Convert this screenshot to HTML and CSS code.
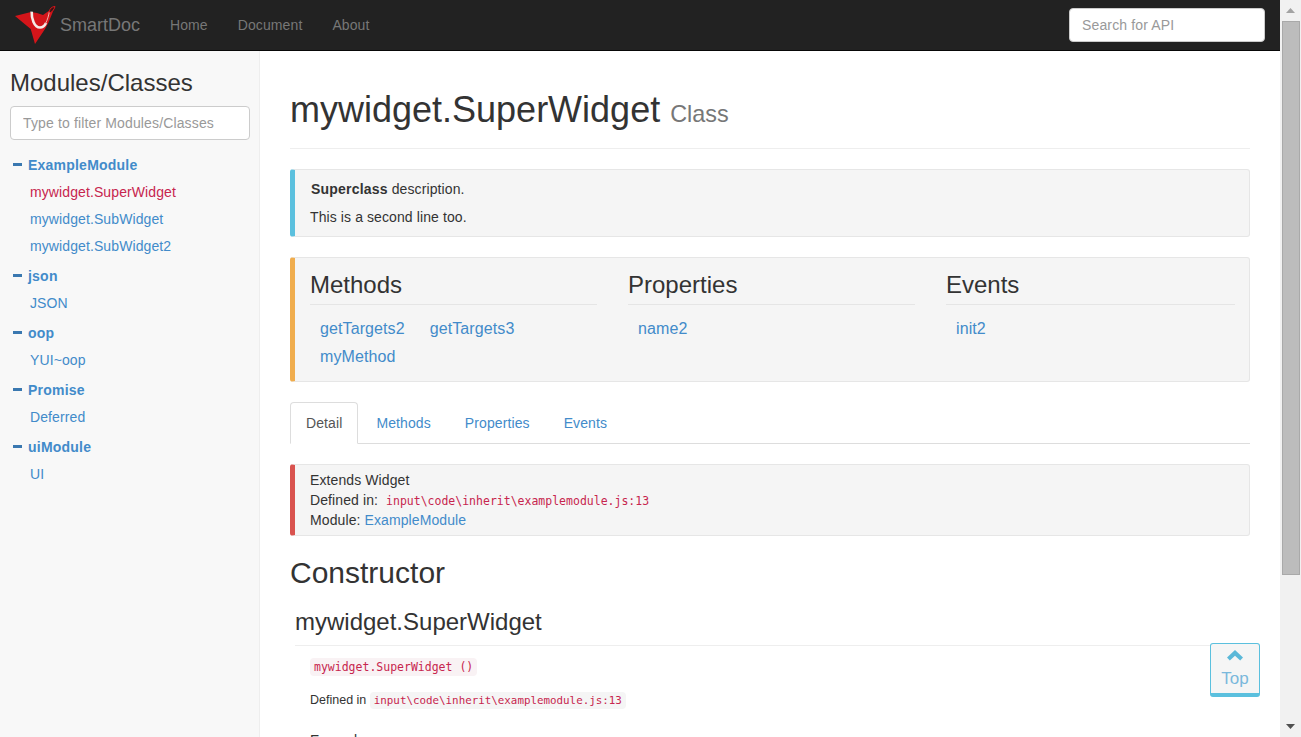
FILE: index.html
```html
<!DOCTYPE html>
<html lang="en">
<head>
<meta charset="utf-8">
<title>SmartDoc</title>
<link rel="stylesheet" href="styles.css">
</head>
<body>
<div class="window">
  <div class="page">
    <nav class="navbar">
      <a class="brand">
        <svg class="logo" width="42" height="41" viewBox="0 0 42 41">
          <path d="M1 12 L17 8 L23 9 L29 11 L41 2.5 L34.5 18.5 L31 25 L21 40 L16.7 25 Z" fill="#d4151a"/>
          <path d="M17.7 7.6 C17.4 14 20 23.5 26 23.5 C29 23.5 31 21 32 19" fill="none" stroke="#f6ece8" stroke-width="2.6"/>
          <path d="M31.5 19.5 C33.5 16 34.5 12 35.3 8" fill="none" stroke="#eeb4ac" stroke-width="1"/>
          <path d="M35.3 8 C35.5 4.5 38 2.5 41 2.5 C40.5 5 38.5 7.5 36 9" fill="#3a1414" stroke="#d4151a" stroke-width="1"/>
        </svg>
        <span class="brand-name">SmartDoc</span>
      </a>
      <ul class="nav-links">
        <li><a>Home</a></li>
        <li><a>Document</a></li>
        <li><a>About</a></li>
      </ul>
      <input class="search" type="text" placeholder="Search for API">
    </nav>
    <div class="columns">
      <aside class="sidebar">
        <h3 class="side-title">Modules/Classes</h3>
        <input class="filter" type="text" placeholder="Type to filter Modules/Classes">
        <div class="group">
          <div class="group-head"><i class="minus"></i>ExampleModule</div>
          <a class="item active">mywidget.SuperWidget</a>
          <a class="item">mywidget.SubWidget</a>
          <a class="item">mywidget.SubWidget2</a>
        </div>
        <div class="group">
          <div class="group-head"><i class="minus"></i>json</div>
          <a class="item">JSON</a>
        </div>
        <div class="group">
          <div class="group-head"><i class="minus"></i>oop</div>
          <a class="item">YUI~oop</a>
        </div>
        <div class="group">
          <div class="group-head"><i class="minus"></i>Promise</div>
          <a class="item">Deferred</a>
        </div>
        <div class="group">
          <div class="group-head"><i class="minus"></i>uiModule</div>
          <a class="item">UI</a>
        </div>
      </aside>
      <main class="content">
        <div class="page-header">
          <h1>mywidget.SuperWidget <small>Class</small></h1>
        </div>
        <div class="callout callout-info">
          <p class="desc-first"><strong>Superclass</strong> description.</p>
          <p class="desc-second">This is a second line too.</p>
        </div>
        <div class="callout callout-warning summary">
          <section class="sum-col">
            <h3>Methods</h3>
            <div class="sum-links"><a>getTargets2</a><a>getTargets3</a><a>myMethod</a></div>
          </section>
          <section class="sum-col">
            <h3>Properties</h3>
            <div class="sum-links"><a>name2</a></div>
          </section>
          <section class="sum-col">
            <h3>Events</h3>
            <div class="sum-links"><a>init2</a></div>
          </section>
        </div>
        <ul class="tabs">
          <li class="tab active">Detail</li>
          <li class="tab">Methods</li>
          <li class="tab">Properties</li>
          <li class="tab">Events</li>
        </ul>
        <div class="callout callout-danger detail">
          <div>Extends Widget</div>
          <div>Defined in: <code class="plain">input\code\inherit\examplemodule.js:13</code></div>
          <div>Module: <a>ExampleModule</a></div>
        </div>
        <h2 class="section-title">Constructor</h2>
        <div class="member">
          <h3 class="member-title">mywidget.SuperWidget</h3>
          <div class="member-body">
            <p class="signature"><code>mywidget.SuperWidget ()</code></p>
            <p class="defined">Defined in <code class="grey">input\code\inherit\examplemodule.js:13</code></p>
            <h4 class="example">Example</h4>
          </div>
        </div>
      </main>
    </div>
    <a class="to-top">
      <svg class="chev" width="16" height="11" viewBox="0 0 16 11"><path d="M8 0 L16 7.5 L13.2 10.5 L8 5.8 L2.8 10.5 L0 7.5 Z" fill="#5bb8d8"/></svg>
      <span>Top</span>
    </a>
  </div>
  <div class="scrollbar">
    <div class="sb-btn"><svg width="9" height="5" viewBox="0 0 9 5"><path d="M4.5 0 L9 5 H0 Z" fill="#a3a3a3"/></svg></div>
    <div class="sb-track"><div class="sb-thumb"></div></div>
    <div class="sb-btn"><svg width="9" height="5" viewBox="0 0 9 5"><path d="M0 0 H9 L4.5 5 Z" fill="#505050"/></svg></div>
  </div>
</div>
</body>
</html>
```
FILE: styles.css
```css
* { box-sizing: border-box; }
html, body { margin: 0; height: 100%; overflow: hidden; }
body { font-family: "Liberation Sans", Arial, sans-serif; font-size: 14px; line-height: 20px; letter-spacing: 0.1px; color: #333; background: #fff; }
a { color: #428bca; text-decoration: none; }
h1, h2, h3, h4, p, ul { margin: 0; padding: 0; }
h1, h2, h3 { font-weight: 500; color: #333; line-height: 1.1; letter-spacing: 0; }
ul { list-style: none; }
strong { letter-spacing: 0.2px; }

.window { display: flex; width: 1301px; height: 737px; }
.page { position: relative; flex: 1; min-width: 0; display: flex; flex-direction: column; height: 737px; overflow: hidden; }

.navbar { flex: none; height: 51px; background: #222; border-bottom: 1px solid #080808; display: flex; align-items: center; padding: 0 15px 1px 14px; }
.brand { display: flex; align-items: center; }
.logo { display: block; }
.brand-name { margin-left: 4px; font-size: 18px; letter-spacing: 0; color: #777; }
.nav-links { display: flex; margin-left: 15px; }
.nav-links a { display: block; padding: 0 15px; color: #777; }
.search { margin-left: auto; width: 196px; height: 34px; border: 1px solid #ccc; border-radius: 4px; padding: 6px 12px; font: 14px "Liberation Sans", Arial, sans-serif; letter-spacing: 0.14px; background: #fff; color: #555; }
.search::placeholder, .filter::placeholder { color: #999; opacity: 1; }

.columns { flex: 1; min-height: 0; display: flex; }
.sidebar { flex: none; width: 260px; background: #f8f8f8; border-right: 1px solid #eee; padding: 19px 9px 0 10px; }
.side-title { font-size: 24px; line-height: 26px; margin-bottom: 10px; font-weight: 500; }
.filter { display: block; width: 240px; height: 34px; border: 1px solid #ccc; border-radius: 4px; padding: 6px 12px; font: 14px "Liberation Sans", Arial, sans-serif; letter-spacing: 0.14px; background: #fff; margin-bottom: 12px; }
.group { margin-bottom: 3px; }
.group-head { display: flex; align-items: center; height: 27px; padding: 0 0 2px 3px; font-weight: 700; letter-spacing: 0.22px; color: #428bca; }
.minus { width: 9px; height: 3px; background: #3a78b0; margin-right: 6px; }
.item { display: block; height: 27px; line-height: 27px; padding-left: 20px; }
.item.active { color: #c7254e; }

.content { flex: 1; min-width: 0; padding: 0 30px; overflow: hidden; }
.page-header { padding: 39px 0 14px; border-bottom: 1px solid #eee; margin-bottom: 20px; }
h1 { font-size: 36px; line-height: 40px; }
h1 small { font-size: 23.4px; font-weight: 400; color: #777; }

.callout { background: #f5f5f5; border: 1px solid #e6e6e6; border-left: 5px solid #5bc0de; border-radius: 3px; margin-bottom: 20px; padding: 0 15px; }
.callout-info { height: 68px; padding-top: 9px; }
.callout-warning { border-left-color: #f0ad4e; }
.callout-danger { border-left-color: #d9534f; }
.desc-first { padding-left: 1px; margin-bottom: 8px; }
.summary { height: 125px; display: grid; grid-template-columns: 287px 287px 289px; column-gap: 31px; padding-top: 13px; }
.sum-col h3 { font-size: 24px; line-height: 27px; padding-bottom: 6px; border-bottom: 1px solid #e5e5e5; font-weight: 500; }
.sum-links { display: flex; flex-wrap: wrap; column-gap: 5px; margin-top: 10px; }
.sum-links a { font-size: 16px; letter-spacing: 0.1px; line-height: 28px; padding: 0 10px; }

.tabs { display: flex; height: 42px; border-bottom: 1px solid #ddd; margin-bottom: 20px; }
.tab { height: 42px; padding: 10px 15px 0; margin-right: 2px; color: #428bca; border: 1px solid transparent; border-radius: 4px 4px 0 0; }
.tab.active { color: #555; background: #fff; border-color: #ddd #ddd #fff; }

.detail { height: 72px; padding-top: 5px; line-height: 20px; margin-bottom: 0; }
code { font-family: "DejaVu Sans Mono", monospace; font-size: 11.5px; line-height: 1; letter-spacing: 0; color: #c7254e; padding: 2px 4px; border-radius: 4px; background: #f9f2f4; }
code.plain { background: transparent; }
code.grey { font-size: 10.85px; background: #f5f5f5; }

.section-title { font-size: 30px; line-height: 33px; margin-top: 20px; }
.member { padding-left: 5px; }
.member-title { font-size: 24px; line-height: 26px; padding-bottom: 10px; border-bottom: 1px solid #eee; margin-top: 20px; }
.member-body { padding-left: 15px; }
.signature { margin-top: 10px; }
.defined { margin-top: 14px; font-size: 12.5px; letter-spacing: 0; }
.example { margin-top: 22px; font-size: 14px; font-weight: 500; color: #333; line-height: 16px; }

.to-top { position: absolute; left: 1210px; top: 643px; width: 50px; height: 54px; display: flex; flex-direction: column; align-items: center; background: #f5f5f5; border: 1px solid #5bc0de; border-bottom-width: 4px; border-radius: 3px; color: #7ab8dc; font-size: 17px; letter-spacing: 0; line-height: 20px; padding-top: 6px; }
.chev { display: block; margin-bottom: 8px; }

.scrollbar { flex: none; width: 21px; height: 737px; background: #f1f1f1; display: flex; flex-direction: column; }
.sb-btn { flex: none; height: 21px; display: flex; align-items: center; justify-content: center; }
.sb-track { flex: 1; min-height: 0; }
.sb-thumb { height: 554px; margin: 0 1px 0 2px; background: #bcbcbc; border: 1px solid #a9a9a9; }
```
